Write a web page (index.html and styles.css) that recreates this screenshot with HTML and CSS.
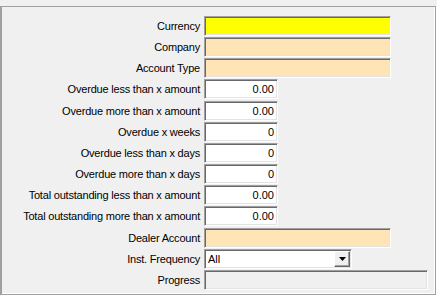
FILE: index.html
```html
<!DOCTYPE html>
<html lang="en">
<head>
    <meta charset="UTF-8">
    <title>Report Filter</title>
    <link rel="stylesheet" href="styles.css">
</head>
<body>
    <div class="panel">
        <div class="form">
            <label>Currency</label><div class="field wide yellow"></div>
            <label>Company</label><div class="field wide peach"></div>
            <label>Account Type</label><div class="field wide peach"></div>
            <label>Overdue less than x amount</label><div class="field num">0.00</div>
            <label>Overdue more than x amount</label><div class="field num">0.00</div>
            <label>Overdue x weeks</label><div class="field num">0</div>
            <label>Overdue less than x days</label><div class="field num">0</div>
            <label>Overdue more than x days</label><div class="field num">0</div>
            <label>Total outstanding less than x amount</label><div class="field num">0.00</div>
            <label>Total outstanding more than x amount</label><div class="field num">0.00</div>
            <label>Dealer Account</label><div class="field wide peach"></div>
            <label>Inst. Frequency</label>
            <div class="field combo"><span class="combo-text">All</span><span class="combo-btn"><svg width="7" height="4" viewBox="0 0 7 4"><path d="M0 0h7L3.5 4z" fill="#000"/></svg></span></div>
            <label>Progress</label><div class="field progress"></div>
        </div>
    </div>
</body>
</html>
```

FILE: styles.css
```css
* { margin: 0; padding: 0; box-sizing: border-box; }
body { background: #f0f0f0; font-family: 'Liberation Sans', Arial, sans-serif; font-size: 11px; color: #000; width: 437px; height: 296px; overflow: hidden; }
.panel { margin-top: 6px; height: 289px; width: 436px; border: 1px solid #a0a0a0; border-left-width: 2px; box-shadow: inset -1px -1px 0 #fff, 1px 1px 0 #fff; }
.form { display: grid; grid-template-columns: 198px 1fr; column-gap: 4px; grid-auto-rows: 21.17px; padding-top: 9px; }
.form label { text-align: right; line-height: 20px; white-space: nowrap; letter-spacing: -0.2px; }
.field { height: 20px; border: 1px solid; border-color: #a0a0a0 #fff #fff #a0a0a0; box-shadow: inset 1px 1px 0 #696969, inset -1px -1px 0 #e3e3e3; background: #fff; line-height: 18px; padding: 0 3px; }
.wide { width: 187px; }
.yellow { background: #ffff00; }
.peach { background: #ffe4b5; }
.num { width: 74px; text-align: right; }
.combo { width: 148px; display: flex; justify-content: space-between; padding: 0 1px 0 3px; }
.combo-text { line-height: 18px; }
.combo-btn { width: 16px; height: 16px; margin-top: 1px; background: #f0f0f0; border: 1px solid; border-color: #fff #696969 #696969 #fff; box-shadow: inset -1px -1px 0 #a0a0a0; display: flex; align-items: center; justify-content: center; }
.progress { width: 224px; background: #f0f0f0; }
```
